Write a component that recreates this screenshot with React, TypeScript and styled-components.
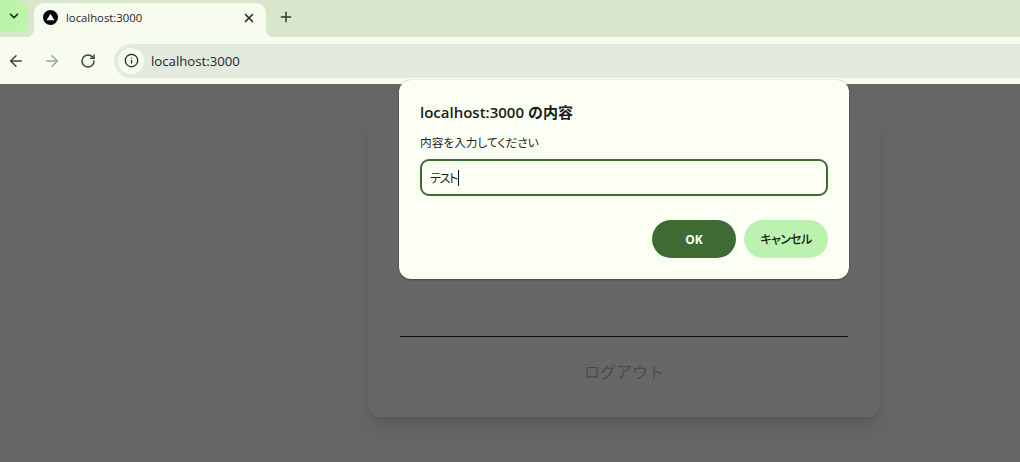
import { createGlobalStyle, styled } from "styled-components";
import { ArrowLeft, ArrowRight, ChevronDown, Info, Plus, RotateCw, X } from "lucide-react";

const GlobalStyle = createGlobalStyle`
  html, body {
    margin: 0;
    height: 100%;
    overflow: hidden;
    background: #656565;
  }
  body {
    font-family: "Open Sans", "Noto Sans CJK JP", sans-serif;
  }
`;

const Window = styled.div`
  position: relative;
  width: 1020px;
  height: 462px;
  display: flex;
  flex-direction: column;
  overflow: hidden;
`;

const TabStrip = styled.div`
  height: 37px;
  flex: none;
  display: flex;
  align-items: flex-end;
  background: #d8e6cb;
`;

const TabSearch = styled.div`
  width: 28px;
  height: 32px;
  margin-bottom: 5px;
  border-radius: 0 10px 10px 0;
  display: flex;
  align-items: center;
  justify-content: center;
  background: #bdf5a8;
  color: #1c2a16;
`;

const Tab = styled.div`
  position: relative;
  width: 232px;
  height: 34px;
  margin-left: 6px;
  padding: 0 10px 5px 9px;
  box-sizing: border-box;
  display: flex;
  align-items: center;
  gap: 8px;
  border-radius: 10px 10px 0 0;
  background: #f7fcef;

  &::before,
  &::after {
    content: "";
    position: absolute;
    bottom: 0;
    width: 8px;
    height: 8px;
  }
  &::before {
    left: -8px;
    background: radial-gradient(circle at 0 0, transparent 8px, #f7fcef 8.5px);
  }
  &::after {
    right: -8px;
    background: radial-gradient(circle at 100% 0, transparent 8px, #f7fcef 8.5px);
  }
`;

const TabTitle = styled.span`
  flex: 1;
  font-size: 11.3px;
  color: #1f241c;
`;

const NewTab = styled.div`
  margin: 0 0 4px 12px;
  height: 32px;
  display: flex;
  align-items: center;
  color: #323a2d;
`;

const Toolbar = styled.div`
  height: 47px;
  flex: none;
  display: flex;
  align-items: center;
  padding-left: 7px;
  background: #f7fcef;
`;

const NavButton = styled.div<{ $muted?: boolean }>`
  width: 18px;
  height: 18px;
  margin-right: 18px;
  display: flex;
  align-items: center;
  justify-content: center;
  color: ${(p) => (p.$muted ? "#9ca596" : "#3c4438")};
`;

const Omnibox = styled.div`
  flex: 1;
  height: 34px;
  margin-left: -1px;
  padding-left: 4px;
  display: flex;
  align-items: center;
  gap: 7px;
  border-radius: 17px 0 0 17px;
  background: #e3ebdf;
`;

const SiteInfo = styled.div`
  width: 26px;
  height: 26px;
  border-radius: 50%;
  display: flex;
  align-items: center;
  justify-content: center;
  background: #f7fcef;
  color: #20261d;
`;

const Address = styled.span`
  font-size: 13.2px;
  color: #23281f;
`;

const Page = styled.main`
  flex: 1;
  padding: 33px 0 0 368px;
  background: #656565;
`;

const Card = styled.section`
  width: 512px;
  height: 300px;
  padding: 0 32px 33px;
  box-sizing: border-box;
  display: flex;
  flex-direction: column;
  justify-content: flex-end;
  border-radius: 12px;
  background: #676767;
  box-shadow: 0 10px 15px -3px rgba(0, 0, 0, 0.1), 0 4px 6px -4px rgba(0, 0, 0, 0.1);
`;

const Divider = styled.hr`
  width: 100%;
  height: 1px;
  margin: 0 0 23px;
  border: 0;
  background: #111111;
`;

const Logout = styled.div`
  height: 24px;
  line-height: 24px;
  text-align: center;
  font-size: 16px;
  color: #4c4c4c;
`;

const Dialog = styled.div`
  position: absolute;
  left: 399px;
  top: 80px;
  width: 450px;
  height: 199px;
  padding: 22px 21px 0;
  box-sizing: border-box;
  border-radius: 12px;
  background: #fcfff4;
  box-shadow: 0 0 1px rgba(0, 0, 0, 0.35), 0 1px 2px rgba(0, 0, 0, 0.3);
  font-feature-settings: "palt";
`;

const DialogTitle = styled.h2`
  margin: 0;
  font-size: 15px;
  line-height: 20px;
  font-weight: 600;
  font-feature-settings: normal;
  color: #1a1d17;
`;

const DialogMessage = styled.p`
  margin: 11px 0 0;
  font-size: 11.7px;
  line-height: 18px;
  color: #1f231c;
`;

const PromptField = styled.div`
  margin-top: 8px;
  width: 408px;
  height: 37px;
  padding-left: 8px;
  box-sizing: border-box;
  display: flex;
  align-items: center;
  border: 2px solid #3e6b33;
  border-radius: 9px;
  font-size: 12px;
  letter-spacing: -1.3px;
  color: #1f231c;
`;

const Caret = styled.span`
  width: 1px;
  height: 16px;
  margin-left: 1px;
  background: #111111;
`;

const Actions = styled.div`
  margin-top: 24px;
  width: 408px;
  display: flex;
  justify-content: flex-end;
  gap: 8px;
`;

const ActionButton = styled.div<{ $primary?: boolean }>`
  width: 84px;
  height: 38px;
  display: flex;
  align-items: center;
  justify-content: center;
  border-radius: 19px;
  font-size: 12px;
  font-weight: ${(p) => (p.$primary ? 700 : 500)};
  letter-spacing: ${(p) => (p.$primary ? "0" : "-0.6px")};
  color: ${(p) => (p.$primary ? "#fcfff4" : "#0f1f0a")};
  background: ${(p) => (p.$primary ? "#3e6b33" : "#bcf2b0")};
`;

function AppLogo() {
  return (
    <svg width="15" height="15" viewBox="0 0 15 15">
      <circle cx="7.5" cy="7.5" r="7.5" fill="#000000" />
      <path d="M7.5 3.8 L11.4 10.3 H3.6 Z" fill="#ffffff" />
    </svg>
  );
}

export default function App() {
  return (
    <Window>
      <GlobalStyle />
      <TabStrip>
        <TabSearch>
          <ChevronDown size={14} strokeWidth={3} />
        </TabSearch>
        <Tab>
          <AppLogo />
          <TabTitle>localhost:3000</TabTitle>
          <X size={14} strokeWidth={2.5} color="#1f241c" />
        </Tab>
        <NewTab>
          <Plus size={16} strokeWidth={2.2} />
        </NewTab>
      </TabStrip>
      <Toolbar>
        <NavButton>
          <ArrowLeft size={18} strokeWidth={2} />
        </NavButton>
        <NavButton $muted>
          <ArrowRight size={18} strokeWidth={2} />
        </NavButton>
        <NavButton>
          <RotateCw size={16} strokeWidth={2.2} />
        </NavButton>
        <Omnibox>
          <SiteInfo>
            <Info size={15} strokeWidth={2} />
          </SiteInfo>
          <Address>localhost:3000</Address>
        </Omnibox>
      </Toolbar>
      <Page>
        <Card>
          <Divider />
          <Logout>ログアウト</Logout>
        </Card>
      </Page>
      <Dialog>
        <DialogTitle>localhost:3000 の内容</DialogTitle>
        <DialogMessage>内容を入力してください</DialogMessage>
        <PromptField>
          テスト
          <Caret />
        </PromptField>
        <Actions>
          <ActionButton $primary>OK</ActionButton>
          <ActionButton>キャンセル</ActionButton>
        </Actions>
      </Dialog>
    </Window>
  );
}
